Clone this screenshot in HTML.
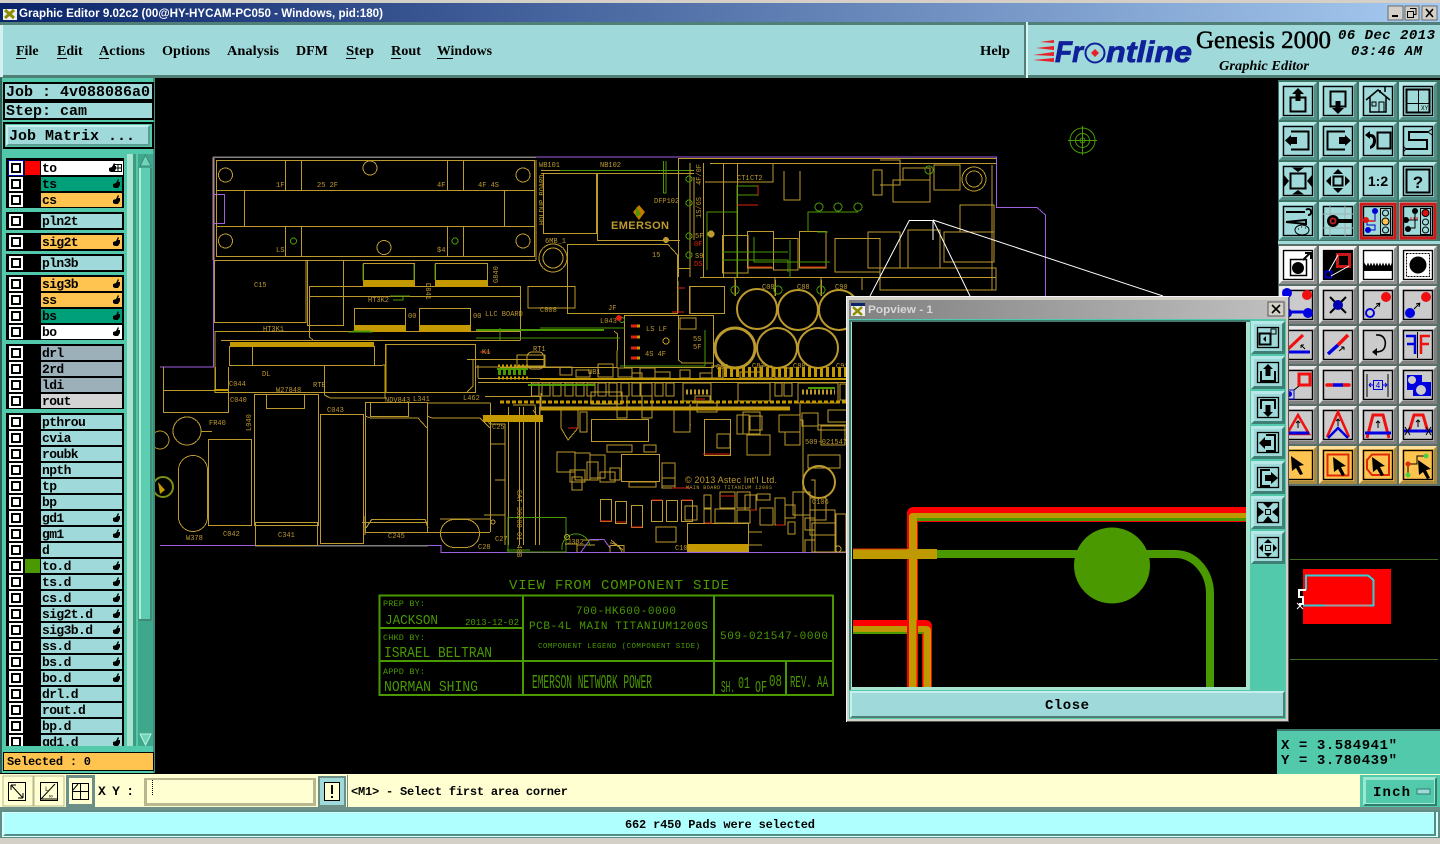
<!DOCTYPE html>
<html><head><meta charset="utf-8"><title>Graphic Editor</title>
<style>
html,body{margin:0;padding:0;background:#000;width:1440px;height:844px;overflow:hidden}
svg{position:absolute;left:0;top:0;display:block}
text{white-space:pre}
.m{font-family:"Liberation Mono",monospace;font-weight:bold;fill:#000}
.l{font-family:"Liberation Mono",monospace;font-weight:bold;font-size:13px;letter-spacing:-.6px;fill:#000}
.s{font-family:"Liberation Serif",serif;font-weight:bold;font-size:14px;fill:#000}
.t{font-family:"Liberation Mono",monospace;font-size:7px;fill:#bd9a2e}
.g{font-family:"Liberation Mono",monospace;fill:#4a9900}
</style></head><body>
<svg width="1440" height="844" viewBox="0 0 1440 844" xmlns="http://www.w3.org/2000/svg">
<defs>
<linearGradient id="tb" x1="0" x2="1" y1="0" y2="0"><stop offset="0" stop-color="#0a246a"/><stop offset="1" stop-color="#a6caf0"/></linearGradient>
<linearGradient id="pb" x1="0" x2="1" y1="0" y2="0"><stop offset="0" stop-color="#808080"/><stop offset="1" stop-color="#c0c0c0"/></linearGradient>
<g id="bt"><rect width="38" height="38" fill="#b8e8e8"/><path d="M38 0V38H0L3 35H35V3Z" fill="#4f8f86"/><rect x="3" y="3" width="32" height="32" fill="#9fd9d9"/><rect x="4.500" y="4.500" width="29" height="29" fill="none" stroke="#000" stroke-width="1.400"/></g>
<g id="bw"><rect width="38" height="38" fill="#f4f4f4"/><path d="M38 0V38H0L3 35H35V3Z" fill="#909090"/><rect x="3" y="3" width="32" height="32" fill="#fff"/><rect x="4.500" y="4.500" width="29" height="29" fill="none" stroke="#000" stroke-width="1.400"/></g>
<g id="bg"><rect width="38" height="38" fill="#e8e8e8"/><path d="M38 0V38H0L3 35H35V3Z" fill="#808080"/><rect x="3" y="3" width="32" height="32" fill="#cbcbcb"/><rect x="4.500" y="4.500" width="29" height="29" fill="none" stroke="#000" stroke-width="1.400"/></g>
<g id="bo"><rect width="38" height="38" fill="#ffdf9a"/><path d="M38 0V38H0L3 35H35V3Z" fill="#a88a40"/><rect x="3" y="3" width="32" height="32" fill="#ffc44f"/><rect x="4.500" y="4.500" width="29" height="29" fill="none" stroke="#000" stroke-width="1.400"/></g>
<g id="pt"><rect width="34" height="33" fill="#b8e8e8"/><path d="M34 0V33H0L3 30H31V3Z" fill="#3f8074"/><rect x="3" y="3" width="28" height="27" fill="#9fd9d9"/><rect x="6.500" y="6.500" width="21" height="20" fill="none" stroke="#000" stroke-width="1.300"/></g>
<g id="ck"><rect x="9" y="-7" width="14" height="14" fill="#fff"/><rect x="11" y="-5" width="10" height="10" fill="#000"/><rect x="13" y="-3" width="6" height="6" fill="#fff"/></g>
<path id="hd" d="M113 3V0L116-1 118-5 119-4 118-2 120-2V1L118 4H115Z" fill="#000"/>
<path id="ar" d="M0 0L13 9 8 10 12 18 9 19 5 12 1 15Z" fill="#000"/>
</defs>

<!-- window background -->
<rect width="1440" height="844" fill="#000"/>
<rect width="1440" height="3" fill="#d4d0c8"/>
<rect y="3" width="1440" height="19" fill="url(#tb)"/>
<rect x="3" y="6" width="14" height="14" fill="#eee"/><rect x="3" y="6" width="14" height="3" fill="#0a246a"/>
<path d="M5 10L14 18M14 10L5 18" stroke="#8c8c00" stroke-width="3"/>
<text x="19" y="17" font-family="Liberation Sans,sans-serif" font-weight="bold" font-size="11.500px" fill="#fff" textLength="364" lengthAdjust="spacingAndGlyphs">Graphic Editor 9.02c2 (00@HY-HYCAM-PC050 - Windows, pid:180)</text>
<g>
<rect x="1388" y="6" width="15" height="14" fill="#d4d0c8" stroke="#555" stroke-width=".8"/><rect x="1392" y="15" width="6" height="2" fill="#000"/>
<rect x="1405" y="6" width="14" height="14" fill="#d4d0c8" stroke="#555" stroke-width=".8"/><path d="M1410 8.500h6v6h-2M1407.500 11.500h6v6h-6z" fill="none" stroke="#000"/>
<rect x="1422" y="6" width="15" height="14" fill="#d4d0c8" stroke="#555" stroke-width=".8"/><path d="M1426 9L1433 17M1433 9L1426 17" stroke="#000" stroke-width="1.600"/>
</g>

<!-- menu bar -->
<rect y="22" width="1440" height="56" fill="#9fd9d9"/>
<rect y="22" width="1440" height="3" fill="#4f7f76"/>
<rect y="75" width="1440" height="3" fill="#4f7f76"/>
<rect x="0" y="25" width="3" height="52" fill="#d2f2f2"/>
<rect x="1024" y="25" width="2" height="52" fill="#4f7f76"/><rect x="1026" y="22" width="2" height="56" fill="#d8f4f4"/>
<text class="s" x="16" y="55">File</text><rect x="16" y="58" width="10" height="1"/>
<text class="s" x="57" y="55">Edit</text><rect x="57" y="58" width="10" height="1"/>
<text class="s" x="99" y="55" textLength="46" lengthAdjust="spacingAndGlyphs">Actions</text><rect x="99" y="58" width="10" height="1"/>
<text class="s" x="162" y="55" textLength="48" lengthAdjust="spacingAndGlyphs">Options</text>
<text class="s" x="227" y="55" textLength="52" lengthAdjust="spacingAndGlyphs">Analysis</text>
<text class="s" x="296" y="55">DFM</text>
<text class="s" x="346" y="55" textLength="28" lengthAdjust="spacingAndGlyphs">Step</text><rect x="346" y="58" width="10" height="1"/>
<text class="s" x="391" y="55" textLength="30" lengthAdjust="spacingAndGlyphs">Rout</text><rect x="391" y="58" width="10" height="1"/>
<text class="s" x="437" y="55" textLength="55" lengthAdjust="spacingAndGlyphs">Windows</text><rect x="437" y="58" width="16" height="1"/>
<text class="s" x="980" y="55" textLength="30" lengthAdjust="spacingAndGlyphs">Help</text>

<!-- logo -->
<path d="M1054 40L1040 42 1054 43ZM1054 46L1036 48 1054 50ZM1054 52L1033 55 1054 56ZM1054 58L1033 60 1054 62Z" fill="#e8202a"/>
<text x="1055" y="62" font-family="Liberation Sans,sans-serif" font-weight="bold" font-style="italic" font-size="30px" fill="#10209a" stroke="#10209a" stroke-width=".8" textLength="28" lengthAdjust="spacingAndGlyphs">Fr</text>
<circle cx="1095" cy="53" r="9.500" fill="none" stroke="#10209a" stroke-width="2"/><path d="M1095 49L1099 53 1095 57 1091 53Z" fill="#e8202a"/>
<text x="1106" y="62" font-family="Liberation Sans,sans-serif" font-weight="bold" font-style="italic" font-size="30px" fill="#10209a" stroke="#10209a" stroke-width=".8" textLength="86" lengthAdjust="spacingAndGlyphs">ntline</text>
<text x="1196" y="48" font-family="Liberation Serif,serif" font-size="25px" fill="#000" stroke="#000" stroke-width=".5" textLength="135" lengthAdjust="spacingAndGlyphs">Genesis 2000</text>
<text x="1219" y="70" font-family="Liberation Serif,serif" font-weight="bold" font-style="italic" font-size="14px" fill="#000" textLength="90" lengthAdjust="spacingAndGlyphs">Graphic Editor</text>
<text class="m" x="1338" y="39" font-size="14px" font-style="italic" textLength="97">06 Dec 2013</text>
<text class="m" x="1351" y="55" font-size="14px" font-style="italic" textLength="71">03:46 AM</text>

<!-- PCB canvas -->
<g fill="none" stroke="#bd9a2e" shape-rendering="crispEdges">
<path stroke="#a060e0" d="M213.500 260V367H160M213.500 157H996.500V207.500H1037L1045.500 215V297M160 545.500H441V552.500H846"/>
<path stroke="#b08a90" stroke-width="2" d="M213.500 157V260"/>
<path stroke="#808080" stroke-width="1.500" d="M213 157H536M255 545.500H428"/>
<path stroke="#a060e0" d="M213 194.500H224.500V223.500H213"/>
<path stroke="#4a9900" d="M216.500 195V223"/>
<!-- top connector block -->
<path d="M216.500 160.500H534.500V256.500H216.500ZM216.500 190.500H534.500M244.500 190.500V226.500H504.500V190.500M216.500 226.500H244.500M504.500 226.500H534.500M285.500 160.500V190.500M301.500 160.500V190.500M447.500 160.500V190.500M463.500 160.500V190.500M285.500 226.500V256.500M301.500 226.500V256.500M447.500 226.500V256.500M463.500 226.500V256.500M214 260.500H536M536 160V260"/>
<path d="M214.500 260.500H306V322.500H214.500ZM307.500 260.500H343.500V325.500H307.500ZM363.500 263.500H414.500V286M435.500 263.500H487.500V286M363.500 263V286M435.500 263V286M309.500 286.500H520.500M309.500 296.500H520.500M309.500 286V337L313 340M354.500 308.500H405.500V331M419.500 308.500H470.500V331M354.500 308V331M419.500 308V331M215 331.500H520.500M221 340.500H520.500M520.500 286V340M229.500 346V365.500H374.500V346M252.500 346V365M385.500 344.500H475.500V392.500H385.500ZM467 359.500H544M473 359.500V386L467 392M215 331V392.500H324M324.500 365.500V395L330 398H385L385 365L380 365.500H325"/>
<path d="M163.500 367V412.500H228.500V367M215.500 367V389M163 390.500H229M228.500 392.500H467M254.500 394.500H318.500V525.500H254.500ZM266.500 394.500V408.500H304.500V394.500M255.500 523V545.500H317.500V523M254 522.500H318M320.500 414.500H363.500V543.500H320.500ZM208.500 439.500H251.500V525.500H208.500ZM365.500 402.500H427.500V532.500H365.500ZM370.500 403V416.500H408.500V403M366 416.500L371 418H418L427 428M427.500 403H490.500M427 416L432 418H480L490 428M427.500 532V403M490.500 403V532M365.500 532.500H490M362 522.500H427"/>
<circle cx="187" cy="431" r="14"/><path d="M201 431.500H212"/>
<rect x="178.500" y="455.500" width="29" height="76" rx="14.500"/>
<circle cx="160" cy="440" r="9"/>
<rect x="440.500" y="519.500" width="39" height="28" rx="14"/>
<path d="M372 519.500H425M440 519H490M365 516V535M372 519L366 528M425 519L428 528"/>
<circle cx="225.500" cy="175" r="7"/><circle cx="225.500" cy="241" r="7"/><circle cx="370" cy="168" r="7"/><circle cx="384" cy="247.500" r="7"/><circle cx="523" cy="175" r="7"/><circle cx="523" cy="241" r="7"/>
<circle cx="293.500" cy="241" r="3" stroke="#4a9900"/><circle cx="455" cy="241" r="3" stroke="#4a9900"/>
<!-- right upper -->
<path d="M541 170.500H694M541 173.500H694M543.500 173.500V233.500H596.500V173.500M597.500 173.500V240.500H680M567.500 244.500H668L677.500 255V313.500H567.500ZM678.500 158V277M678.500 158.500H996M703.500 163V277M690 163V277M694 177V240M723.500 164V277M737.500 164V277M700 277.500H996M710 163.500H996M678 268.500H690M689.500 286.500H724.500V313.500H689.500ZM678 281V313M735 277V290M775 277V290M821 277V290M862 277V290"/>
<circle cx="553" cy="258" r="14"/><circle cx="553" cy="258" r="10"/>
<path d="M528 286.500H575V308H528ZM624.500 315.500H713.500V367.500H624.500ZM678.500 315V360L682 363H713M690 286V313M680 318H696V329H680ZM500 367.500H617L617.500 334L614 331M517 355H545V366H517Z"/>
<path d="M722.500 235.500H748V273H722.500ZM747.500 231.500H773.500V268H747.500ZM773.500 238.500H798V270H773.500ZM799.500 231.500H826V268H799.500ZM835 238.500H880V272H835ZM880 160H900V185H880M873 170H882V195H873ZM784 171V200H800V171M773 163V182H705M893 180H930V202H893ZM903 168H930V180H903ZM934 165H960V190H934ZM960 205H994V232H960ZM944 232H994V262H944ZM908 230H940V268H908ZM868 232H900V268H868ZM880 268H996V290H880ZM992 165V290"/>
<circle cx="974" cy="179" r="12"/><circle cx="974" cy="179" r="8"/><circle cx="868" cy="342" r="5"/>
<path stroke-width="1.500" d="M735 280V296M775 280V296M821 280V296"/>
<circle cx="735" cy="290" r="4" stroke="#4a9900"/><circle cx="778" cy="290" r="4" stroke="#4a9900"/><circle cx="821" cy="290" r="4" stroke="#4a9900"/>
<g stroke-width="2" shape-rendering="auto"><circle cx="757" cy="309" r="20"/><circle cx="798" cy="310" r="20"/><circle cx="839" cy="310" r="20"/><circle cx="735" cy="348" r="20" stroke-width="3"/><circle cx="777" cy="348" r="20"/><circle cx="818" cy="348" r="20"/></g>
<circle cx="666" cy="240" r="2.500" fill="#bd9a2e"/><circle cx="666" cy="341" r="3"/><circle cx="711" cy="234" r="3" fill="#bd9a2e"/>
<!-- long rails -->
<path d="M478 378.500H846M478 382.500H846M475 367H560M541 393V410M478 365V378"/>
<path stroke-width="2.500" d="M540 407.500H790"/>
<path d="M485 396.500H540V415M483 415.500L490 424H505V545M508.500 407V545M519.500 407V545M523.500 407V545M535.500 407V545M539.500 407V545M500 420H509M533 410L540 420M505 444H490M505 480H495M484 515H505M513 405H535V410"/>
<path d="M561 409H578V428L568 440 561 428ZM580 412H587V432H580ZM591.500 419.500H648.500V441.500H591.500ZM591 392H622V404H591ZM617 396H627V418H617ZM642 396H652V418H642ZM695 396H710V402H695ZM704.500 419.500H730.500V455.500H704.500ZM691 405H690V425H691M674 410H690V432H674ZM697 403H717V412H697ZM743 412H760V434H743ZM747 435H770V455H747ZM750 416H762V430H750ZM779 415H800V432H779ZM785 432H800V445H785ZM802 413H818V426H802ZM828 410H860V422H828ZM818 425H860V430H818Z"/>
<path d="M557 452H575V472H557ZM575 453H590V480H575ZM590 455H605V478H590ZM570 470H585V482H570ZM587 462H598V480H587ZM607 445H632V452H607ZM644 445H656V452H644ZM621.500 454.500H659.500V481.500H621.500ZM629 482H656V487H629ZM662 463H675V486H662ZM662 478H675V488H662ZM610 468H620V480H610ZM600 472H615V482H600ZM572 477H582V490H572ZM685 506H697V520H685ZM717 434H730V448H717ZM737 415H749V434H737Z"/>
<path d="M600.500 499.500H611.500V521.500H600.500ZM615.500 501.500H626.500V523.500H615.500ZM631.500 505.500H642.500V527.500H631.500ZM651.500 500.500H662.500V521.500H651.500ZM666.500 500.500H677.500V521.500H666.500ZM681.500 500.500H692.500V521.500H681.500ZM656 527H676V542H656ZM704 495H711V508H704ZM720 492H735V508H720ZM737 492H750V508H737ZM704 509H711V523H704ZM715 509H735V523H715ZM737 510H750V523H737ZM745 495H756V510H745ZM757 494H770V500H757ZM760 508H773V525H760ZM775 498H785V525H775ZM785 505H795V518H785ZM788 522H795V534H788ZM687.500 523.500H748.500V551.500H687.500ZM748 532H762M748 545H762"/>
<path d="M793 492H810V515H793ZM810 498H826V520H810ZM810 510H835V535H810ZM811 480H815V552M803 420V552M803 420H800V404M808 455H840V468H808ZM805 518H815V530H805ZM812 523H835V552H812ZM836 514H846V552H836ZM805 552V540H815V552M821 426H845V445H821Z"/>
<circle cx="819" cy="482" r="16" stroke-width="2" shape-rendering="auto"/><circle cx="838" cy="549" r="3"/>
<path d="M577 545L595 545M583 540H599M611 540L623 550"/>
<path stroke="#a060e0" d="M581 552L590 539.500H604L610 548V552"/>
<path stroke="#4a9900" d="M508 517.500H566V552H508ZM507 550H530M562 550A12 12 0 0 1 590 546"/>
<path d="M610 552V545.500H624V552M610 543A14 14 0 0 1 622 552M565 544H577V552"/>
<circle cx="567" cy="537" r="2.500"/><circle cx="493" cy="522" r="2"/>
<!-- connectors -->
<path d="M531.500 383H539V396H531.500ZM542 383H550V396H542ZM553 383H561V396H553ZM565 383H573V396H565ZM576 383H584V396H576ZM587 383H595V396H587ZM598 383H606V396H598ZM609 383H617V396H609ZM621 383H629V396H621ZM632 383H640V396H632ZM641 383H652V396H641ZM655 383H663V396H655ZM666 383H674V396H666ZM683 383H711V401H683ZM738 383H770V401H738ZM775 383H782V396H775ZM784 383H792V396H784ZM798 383H838V403H798ZM840 384H846V400H840Z"/>
<path d="M560 367H572V375H560ZM576 370H590V377H576ZM598 364H613V377H598ZM618 368H632V377H618ZM632 373H642V378H632ZM640 368H655V378H640ZM655 372H670V378H655ZM680 370H690V378H680ZM700 373H712V378H700ZM712 366H723V378H712ZM740 372H760V378H740ZM760 366H772V378H760ZM775 368H790V378H775Z"/>
<rect x="527" y="352" width="17" height="17" rx="5"/>
<!-- gold fills -->
<g fill="#c49a00" stroke="none">
<rect x="363" y="280" width="52" height="7"/><rect x="435" y="280" width="52" height="7"/>
<rect x="354" y="325" width="52" height="7"/><rect x="419" y="325" width="52" height="7"/>
<rect x="230" y="342" width="144" height="5"/>
<rect x="483" y="415" width="60" height="7"/>
<rect x="687" y="544" width="61" height="7"/>
<rect x="385" y="344" width="1.500" height="48"/>
<rect x="214" y="389" width="14" height="2"/>
<rect x="540" y="378" width="306" height="2"/>
<rect x="540" y="408" width="250" height="2.500"/>
</g>
<!-- dense comb -->
<path stroke-width="5" stroke-dasharray="2 2" d="M686 392H708M802 392H835"/>
<path stroke="#c49a00" stroke-width="10" stroke-dasharray="3 3" d="M718 372H846"/>
<path stroke="#c49a00" stroke-width="3" stroke-dasharray="4 2" d="M500 402H846"/>
<path stroke="#4a9900" stroke-width="6" stroke-dasharray="3 2" d="M498 372H528"/>
<path stroke="#c49a00" stroke-width="3" stroke-dasharray="2 2" d="M498 366H528M498 378H528"/>
<path stroke="#4a9900" stroke-width="2" d="M528 385H595M497 369H528M808 388H835"/>
<!-- greens -->
<g stroke="#4a9900">
<path d="M560 170.500H690M663.500 161V193H666V161M737 186H758V195H737ZM737 185V277M737 212H707V270M722 252H788M722 260H788V272M808 232V212H819M818 212H858M828 232H817M754 237V262M754 262H830M790 240V278M500 328V340M540 328H625M476 338H620M705 330V366H620"/>
<circle cx="689" cy="179" r="3"/><circle cx="689" cy="203" r="3"/><circle cx="689" cy="236" r="3"/><circle cx="689" cy="255" r="3"/><circle cx="622" cy="320" r="2.500"/>
<circle cx="819" cy="207" r="4"/><circle cx="838" cy="207" r="4"/><circle cx="858" cy="207" r="4"/><circle cx="929" cy="170" r="4"/>
<path d="M390 296H410M393 300H403V297M353 331H370M348 332H373M363 281V264M414 264V280M435 264V280"/>
<path stroke-width="2" d="M476 330H604"/>
</g>
<!-- reds -->
<g stroke="#e02010">
<path d="M737 205H758M758 185V196M748 267H772M800 267H826M679 288H685M684 312H672M480 352H490"/>
<path d="M703 454H730M612 521H600M642 527H631M662 500H652M692 500H682M626 522H616M568 428H578M672 488H690M696 399H705M721 496H735M712 523H705M757 510H750M776 525H785"/>
</g>
<path stroke="#e02010" stroke-width="3" d="M631 326H637M631 337H637M631 348H637M631 358H637"/>
<path stroke="#c49a00" stroke-width="3" d="M637 326H640M637 337H640M637 348H640M637 358H640"/>
</g>
<circle cx="619" cy="318" r="3" fill="#e02010"/>
<circle cx="163" cy="487" r="10" fill="none" stroke="#7f8f10" stroke-width="2"/><path d="M158 482L165 490 160 494Z" fill="#c49a00"/>
<path d="M639 205L645 212 639 220 633 212Z" fill="#c47a00"/><path d="M636 207L641 214 636 217Z" fill="#4a9900"/>
<g class="t">
<text class="t" x="276" y="187">1F</text><text class="t" x="317" y="187">25 2F</text><text class="t" x="437" y="187">4F</text><text class="t" x="478" y="187">4F 4S</text>
<text class="t" x="276" y="252">LS</text><text class="t" x="437" y="252">$4</text>
<text class="t" x="254" y="287" font-size="8">C15</text><text class="t" x="368" y="302">HT3K2</text><text class="t" x="263" y="331">HT3K1</text>
<text class="t" x="408" y="318">00</text><text class="t" x="473" y="318">00</text><text class="t" x="485" y="316" font-size="8">LLC BOARD</text>
<text class="t" x="482" y="354">K1</text><text class="t" x="229" y="386">C044</text><text class="t" x="230" y="402">C040</text><text class="t" x="276" y="392">W27848</text><text class="t" x="313" y="387">RTE</text>
<text class="t" x="262" y="376">DL</text><text class="t" x="385" y="402">NDV843</text><text class="t" x="413" y="401">L341</text><text class="t" x="463" y="400">L462</text>
<text class="t" x="327" y="412">C043</text><text class="t" x="209" y="425">FR40</text><text class="t" x="223" y="536">C042</text><text class="t" x="278" y="537">C341</text><text class="t" x="388" y="538">C245</text><text class="t" x="186" y="540">W378</text>
<text class="t" x="539" y="167">WB101</text><text class="t" x="600" y="167">NB102</text><text class="t" x="654" y="203">DFP102</text><text class="t" x="652" y="257">15</text><text class="t" x="608" y="310">JF</text><text class="t" x="600" y="323">L043</text>
<text class="t" x="540" y="312">C808</text><text class="t" x="545" y="243">6MB_1</text><text class="t" x="533" y="351">RT1</text><text class="t" x="588" y="374">WB1</text><text class="t" x="646" y="331">LS LF</text><text class="t" x="645" y="356">4S 4F</text>
<text class="t" x="693" y="341">5S</text><text class="t" x="693" y="349">5F</text><text class="t" x="695" y="238">5F</text><text class="t" x="695" y="258">S9</text>
<text x="694" y="246" font-family="Liberation Mono,monospace" font-size="7px" fill="#e02010">0F</text><text x="694" y="266" font-family="Liberation Mono,monospace" font-size="7px" fill="#e02010">DS</text>
<text class="t" x="737" y="180">CT1</text><text class="t" x="750" y="180" fill="#d0601a">CT2</text>
<text class="t" x="762" y="289">C08</text><text class="t" x="797" y="289">C88</text><text class="t" x="835" y="289">C90</text><text class="t" x="716" y="369">C89</text><text class="t" x="752" y="368">C87</text><text class="t" x="793" y="368">C88</text><text class="t" x="836" y="368">C91</text>
<text class="t" x="492" y="429">C25</text><text class="t" x="805" y="444" font-size="6">509-021547-00</text><text class="t" x="812" y="504">C106</text><text class="t" x="675" y="550">C101</text><text class="t" x="478" y="549">C28</text><text class="t" x="567" y="544">J382</text><text class="t" x="495" y="541">C27</text>
<text x="685" y="483" font-family="Liberation Sans,sans-serif" font-size="9px" fill="#bd9a2e" textLength="92">© 2013 Astec Int'l Ltd.</text>
<text x="686" y="489" font-family="Liberation Mono,monospace" font-size="5px" fill="#bd9a2e" textLength="86">MAIN BOARD TITANIUM 1200S</text>
<text x="611" y="229" font-family="Liberation Sans,sans-serif" font-weight="bold" font-size="11px" fill="#bd9a2e" textLength="58">EMERSON</text>
<text transform="translate(544,225) rotate(-90)" class="t">HOLDUP BOARD</text><text transform="translate(701,185) rotate(-90)" class="t">4F/0F</text><text transform="translate(701,218) rotate(-90)" class="t">1S/6S</text>
<text transform="translate(426,283) rotate(90)" class="t">D841</text><text transform="translate(498,283) rotate(-90)" class="t">G840</text><text transform="translate(251,431) rotate(-90)" class="t">L040</text>
<text transform="translate(517,490) rotate(90)" class="t" font-size="6.500">CAT-38208-01-48B</text>
</g>

<!-- crosshair -->
<g fill="none" stroke="#4a9900"><circle cx="1082.500" cy="140.500" r="12.500"/><circle cx="1082.500" cy="140.500" r="7"/><circle cx="1082.500" cy="140.500" r="2.500"/><path d="M1068 140.500H1097M1082.500 126V155" shape-rendering="crispEdges"/></g>

<!-- title block -->
<g fill="none" stroke="#4a9900" stroke-width="2" shape-rendering="crispEdges"><path d="M379.500 595.500H833V695H379.500ZM523 595V695M714 595V695M380 661H833M380 628H523M786 661V695"/></g>
<text class="g" x="509" y="589" font-size="14px" textLength="220">VIEW FROM COMPONENT SIDE</text>
<text class="g" x="383" y="606" font-size="8.500px" textLength="42">PREP BY:</text>
<text class="g" x="385" y="624" font-size="14px" textLength="53" lengthAdjust="spacingAndGlyphs">JACKSON</text>
<text class="g" x="465" y="625" font-size="9px" textLength="54">2013-12-02</text>
<text class="g" x="383" y="640" font-size="8.500px" textLength="42">CHKD BY:</text>
<text class="g" x="384" y="657" font-size="15px" textLength="108" lengthAdjust="spacingAndGlyphs">ISRAEL BELTRAN</text>
<text class="g" x="383" y="674" font-size="8.500px" textLength="42">APPD BY:</text>
<text class="g" x="384" y="691" font-size="15px" textLength="94" lengthAdjust="spacingAndGlyphs">NORMAN SHING</text>
<text class="g" x="576" y="614" font-size="11px" textLength="100">700-HK600-0000</text>
<text class="g" x="529" y="629" font-size="11px" textLength="179">PCB-4L MAIN TITANIUM1200S</text>
<text class="g" x="538" y="648" font-size="7.500px" textLength="162">COMPONENT LEGEND (COMPONENT SIDE)</text>
<text class="g" x="720" y="639" font-size="11px" textLength="108">509-021547-0000</text>
<text class="g" x="532" y="688" font-size="19px" textLength="120" lengthAdjust="spacingAndGlyphs">EMERSON NETWORK POWER</text>
<text class="g" x="721" y="692" font-size="17px" textLength="14" lengthAdjust="spacingAndGlyphs">SH.</text>
<text class="g" x="738" y="688" font-size="17px" textLength="12" lengthAdjust="spacingAndGlyphs">01</text>
<text class="g" x="755" y="692" font-size="17px" textLength="12" lengthAdjust="spacingAndGlyphs">OF</text>
<text class="g" x="769" y="686" font-size="17px" textLength="13" lengthAdjust="spacingAndGlyphs">08</text>
<text class="g" x="790" y="687" font-size="17px" textLength="38" lengthAdjust="spacingAndGlyphs">REV. AA</text>

<!-- zoom lines -->
<path fill="none" stroke="#fff" d="M909 220.500H933M909.500 220L870 296M933 220L970 296M933 220L1163 296M933 220V240"/>

<!-- left panel -->
<rect x="0" y="78" width="155" height="695" fill="#52c9aa"/>
<rect x="0" y="78" width="2" height="695" fill="#2f5f55"/><rect x="153" y="78" width="2" height="695" fill="#3f8a78"/>
<rect x="3" y="82" width="151" height="19" fill="#000"/><rect x="5" y="84" width="147" height="15" fill="#9fd9d9"/>
<rect x="3" y="101" width="151" height="19" fill="#000"/><rect x="5" y="103" width="147" height="15" fill="#9fd9d9"/>
<text class="m" x="6" y="96" font-size="15px">Job : 4v088086a0</text>
<text class="m" x="6" y="115" font-size="15px">Step: cam</text>
<rect x="3" y="122" width="151" height="27" fill="#000"/><rect x="5" y="124" width="147" height="23" fill="#52c9aa"/>
<rect x="6" y="125" width="144" height="21" fill="#c8efef"/><path d="M150 125V146H6L8 144H148V127Z" fill="#5b9d93"/><rect x="8" y="127" width="140" height="17" fill="#9fd9d9"/>
<text class="m" x="9" y="140" font-size="15px">Job Matrix ...</text>

<rect x="6" y="158" width="118" height="589" fill="#000"/>
<rect x="6" y="208" width="118" height="4" fill="#52c9aa"/><rect x="6" y="230" width="118" height="3" fill="#52c9aa"/><rect x="6" y="251" width="118" height="3" fill="#52c9aa"/><rect x="6" y="272" width="118" height="3" fill="#52c9aa"/><rect x="6" y="340" width="118" height="4" fill="#52c9aa"/><rect x="6" y="409" width="118" height="4" fill="#52c9aa"/>
<rect x="8" y="160" width="16" height="16" fill="#0000a0"/>
<rect x="25" y="161" width="15" height="14" fill="#f00"/><rect x="25" y="559" width="15" height="14" fill="#4a9900"/>

<rect x="41" y="161" width="82" height="14" fill="#fff"/><use href="#ck" y="168"/><text class="l" x="42" y="172">to</text><use href="#hd" x="-4" y="168"/><path d="M114.500 164.500h7v7h-7zM118 165v6M115 168h6" fill="none" stroke="#000"/>
<rect x="41" y="177" width="81" height="14" fill="#00a07a"/><use href="#ck" y="184"/><text class="l" x="42" y="188">ts</text><use href="#hd" y="184"/>
<rect x="41" y="193" width="81" height="14" fill="#ffc44f"/><use href="#ck" y="200"/><text class="l" x="42" y="204">cs</text><use href="#hd" y="200"/>
<rect x="41" y="214" width="81" height="14" fill="#9fd9d9"/><use href="#ck" y="221"/><text class="l" x="42" y="225">pln2t</text>
<rect x="41" y="235" width="81" height="14" fill="#ffc44f"/><use href="#ck" y="242"/><text class="l" x="42" y="246">sig2t</text><use href="#hd" y="242"/>
<rect x="41" y="256" width="81" height="14" fill="#9fd9d9"/><use href="#ck" y="263"/><text class="l" x="42" y="267">pln3b</text>
<rect x="41" y="277" width="81" height="14" fill="#ffc44f"/><use href="#ck" y="284"/><text class="l" x="42" y="288">sig3b</text><use href="#hd" y="284"/>
<rect x="41" y="293" width="81" height="14" fill="#ffc44f"/><use href="#ck" y="300"/><text class="l" x="42" y="304">ss</text><use href="#hd" y="300"/>
<rect x="41" y="309" width="81" height="14" fill="#00a07a"/><use href="#ck" y="316"/><text class="l" x="42" y="320">bs</text><use href="#hd" y="316"/>
<rect x="41" y="325" width="81" height="14" fill="#fff"/><use href="#ck" y="332"/><text class="l" x="42" y="336">bo</text><use href="#hd" y="332"/>
<rect x="41" y="346" width="81" height="14" fill="#9cb0ba"/><use href="#ck" y="353"/><text class="l" x="42" y="357">drl</text>
<rect x="41" y="362" width="81" height="14" fill="#9cb0ba"/><use href="#ck" y="369"/><text class="l" x="42" y="373">2rd</text>
<rect x="41" y="378" width="81" height="14" fill="#9cb0ba"/><use href="#ck" y="385"/><text class="l" x="42" y="389">ldi</text>
<rect x="41" y="394" width="81" height="14" fill="#d4d4d4"/><use href="#ck" y="401"/><text class="l" x="42" y="405">rout</text>
<rect x="41" y="415" width="81" height="14" fill="#9fd9d9"/><use href="#ck" y="422"/><text class="l" x="42" y="426">pthrou</text>
<rect x="41" y="431" width="81" height="14" fill="#9fd9d9"/><use href="#ck" y="438"/><text class="l" x="42" y="442">cvia</text>
<rect x="41" y="447" width="81" height="14" fill="#9fd9d9"/><use href="#ck" y="454"/><text class="l" x="42" y="458">roubk</text>
<rect x="41" y="463" width="81" height="14" fill="#9fd9d9"/><use href="#ck" y="470"/><text class="l" x="42" y="474">npth</text>
<rect x="41" y="479" width="81" height="14" fill="#9fd9d9"/><use href="#ck" y="486"/><text class="l" x="42" y="490">tp</text>
<rect x="41" y="495" width="81" height="14" fill="#9fd9d9"/><use href="#ck" y="502"/><text class="l" x="42" y="506">bp</text>
<rect x="41" y="511" width="81" height="14" fill="#9fd9d9"/><use href="#ck" y="518"/><text class="l" x="42" y="522">gd1</text><use href="#hd" y="518"/>
<rect x="41" y="527" width="81" height="14" fill="#9fd9d9"/><use href="#ck" y="534"/><text class="l" x="42" y="538">gm1</text><use href="#hd" y="534"/>
<rect x="41" y="543" width="81" height="14" fill="#9fd9d9"/><use href="#ck" y="550"/><text class="l" x="42" y="554">d</text>
<rect x="41" y="559" width="81" height="14" fill="#9fd9d9"/><use href="#ck" y="566"/><text class="l" x="42" y="570">to.d</text><use href="#hd" y="566"/>
<rect x="41" y="575" width="81" height="14" fill="#9fd9d9"/><use href="#ck" y="582"/><text class="l" x="42" y="586">ts.d</text><use href="#hd" y="582"/>
<rect x="41" y="591" width="81" height="14" fill="#9fd9d9"/><use href="#ck" y="598"/><text class="l" x="42" y="602">cs.d</text><use href="#hd" y="598"/>
<rect x="41" y="607" width="81" height="14" fill="#9fd9d9"/><use href="#ck" y="614"/><text class="l" x="42" y="618">sig2t.d</text><use href="#hd" y="614"/>
<rect x="41" y="623" width="81" height="14" fill="#9fd9d9"/><use href="#ck" y="630"/><text class="l" x="42" y="634">sig3b.d</text><use href="#hd" y="630"/>
<rect x="41" y="639" width="81" height="14" fill="#9fd9d9"/><use href="#ck" y="646"/><text class="l" x="42" y="650">ss.d</text><use href="#hd" y="646"/>
<rect x="41" y="655" width="81" height="14" fill="#9fd9d9"/><use href="#ck" y="662"/><text class="l" x="42" y="666">bs.d</text><use href="#hd" y="662"/>
<rect x="41" y="671" width="81" height="14" fill="#9fd9d9"/><use href="#ck" y="678"/><text class="l" x="42" y="682">bo.d</text><use href="#hd" y="678"/>
<rect x="41" y="687" width="81" height="14" fill="#9fd9d9"/><use href="#ck" y="694"/><text class="l" x="42" y="698">drl.d</text>
<rect x="41" y="703" width="81" height="14" fill="#9fd9d9"/><use href="#ck" y="710"/><text class="l" x="42" y="714">rout.d</text>
<rect x="41" y="719" width="81" height="14" fill="#9fd9d9"/><use href="#ck" y="726"/><text class="l" x="42" y="730">bp.d</text>
<rect x="41" y="735" width="81" height="14" fill="#9fd9d9"/><use href="#ck" y="742"/><text class="l" x="42" y="746">gd1.d</text><use href="#hd" y="742"/>

<rect x="0" y="746" width="153" height="27" fill="#52c9aa"/><rect x="0" y="746" width="2" height="27" fill="#2f5f55"/>
<rect x="3" y="752" width="151" height="19" fill="#000"/><rect x="4" y="753" width="149" height="17" fill="#ffc44f"/>
<text class="m" x="7" y="765" font-size="12px" textLength="84">Selected : 0</text>
<!-- scroll column -->
<rect x="127" y="154" width="6" height="592" fill="#a6e4d0"/><rect x="133" y="154" width="3" height="592" fill="#3f9a82"/>
<rect x="138" y="154" width="15" height="592" fill="#3fa88c"/>
<rect x="139" y="168" width="13" height="453" fill="#5ccdb0"/><rect x="139" y="168" width="2" height="453" fill="#b0ecd8"/><rect x="150" y="168" width="2" height="453" fill="#3f8a78"/><rect x="139" y="619" width="13" height="2" fill="#3f8a78"/>
<path d="M145.500 155L151 166H140Z" fill="#6fd5ba" stroke="#3f8a78"/><path d="M145.500 745L151 734H140Z" fill="#6fd5ba" stroke="#c0f0e0"/>

<!-- right toolbar backgrounds -->
<rect x="1278" y="80" width="162" height="162" fill="#3c7566"/>
<rect x="1278" y="241" width="162" height="4" fill="#9fd9d9"/>
<rect x="1278" y="244" width="162" height="242" fill="#5a6f68"/>

<!-- toolbar group 1 -->
<g transform="translate(1279,82)"><use href="#bt"/><path d="M11.500 15.500H26.500V29.500H11.500Z" fill="none" stroke="#000" stroke-width="2"/><path d="M19 6L25 12H21.500V19H16.500V12H13Z"/></g>
<g transform="translate(1319,82)"><use href="#bt"/><path d="M11.500 9.500H26.500V24.500H11.500Z" fill="none" stroke="#000" stroke-width="2"/><path d="M19 32L25 26H21.500V19H16.500V26H13Z"/></g>
<g transform="translate(1359,82)"><use href="#bt"/><path d="M7 18L19 8 31 18M11 15V30H27V15M21 8V11M26 5V10" fill="none" stroke="#000" stroke-width="1.500"/><path d="M13 20h4v4h-4zM20 20h5v10h-5z" fill="none" stroke="#000"/></g>
<g transform="translate(1399,82)"><use href="#bt"/><rect x="7.500" y="7.500" width="23" height="23" fill="none" stroke="#000" stroke-width="2"/><path d="M19.500 8V30M8 21.500H30" stroke="#000"/><text x="22" y="28" font-family="Liberation Mono,monospace" font-size="6px" fill="#000">XY</text></g>

<g transform="translate(1279,122)"><use href="#bt"/><path d="M12 9.500H29.500V27.500H12" fill="none" stroke="#000" stroke-width="2"/><path d="M6 18.500L12 13V15H18V22H12V24Z"/></g>
<g transform="translate(1319,122)"><use href="#bt"/><path d="M26 9.500H8.500V27.500H26" fill="none" stroke="#000" stroke-width="2"/><path d="M32 18.500L26 13V15H20V22H26V24Z"/></g>
<g transform="translate(1359,122)"><use href="#bt"/><rect x="18.500" y="10.500" width="13" height="16" fill="none" stroke="#000" stroke-width="2"/><path d="M6 13L11 9V12C16 12 17 15 17 19 17 23 15 26 11 27V24C13 23 14 21 14 18.500 14 16 13 15 11 15V17Z"/></g>
<g transform="translate(1399,122)"><use href="#bt"/><path d="M29 10H10V18H28V27H7" fill="none" stroke="#000" stroke-width="2"/><path d="M29 10L33 7M29 10L33 13M7 27L4 24M7 27L4 30" stroke="#000" fill="none"/></g>

<g transform="translate(1279,162)"><use href="#bt"/><rect x="11.500" y="11.500" width="15" height="15" fill="none" stroke="#000" stroke-width="2"/><path d="M19 10L13 5.500H25ZM19 28L13 32.500H25ZM10 19L5 13V25ZM28 19L33 13V25Z"/></g>
<g transform="translate(1319,162)"><use href="#bt"/><rect x="14.500" y="14.500" width="9" height="9" fill="none" stroke="#000" stroke-width="2"/><path d="M19 7L14 12H24ZM19 31L14 26H24ZM7 19L12 14V24ZM31 19L26 14V24Z"/></g>
<g transform="translate(1359,162)"><use href="#bt"/><text x="19" y="24" text-anchor="middle" font-family="Liberation Sans,sans-serif" font-weight="bold" font-size="14px" fill="#000">1:2</text></g>
<g transform="translate(1399,162)"><use href="#bt"/><rect x="7.500" y="7.500" width="23" height="23" fill="none" stroke="#000" stroke-width="2"/><text x="19" y="26" text-anchor="middle" font-family="Liberation Sans,sans-serif" font-weight="bold" font-size="17px" fill="#000">?</text></g>

<g transform="translate(1279,202)"><use href="#bt"/><path d="M7 10H26M7 20L27 18V22ZM27 8A3 3 0 1 1 29 13" stroke="#000" stroke-width="2" fill="none"/><ellipse cx="23" cy="28" rx="7" ry="5" fill="none" stroke="#000"/><path d="M19 27h1M22 25h1M26 26h1" stroke="#000"/></g>
<g transform="translate(1319,202)"><use href="#bt"/><path d="M11 4V34M26 4V34M4 12H34M4 26H34" stroke="#9db0b0"/><circle cx="14" cy="19" r="6" fill="#000"/><circle cx="14" cy="19" r="3.500" fill="#c02020"/><rect x="12.500" y="17.500" width="3" height="3" fill="#000"/><rect x="19" y="17" width="14" height="4"/></g>
<g transform="translate(1359,202)"><use href="#bt"/><rect x="2" y="2" width="34" height="34" fill="none" stroke="#d01818" stroke-width="3"/><path d="M16 9V19H8M8 19V23H16V28H8" fill="none" stroke="#0000d0"/><path d="M8 19H16" stroke="#e01010" stroke-width="1.500"/><circle cx="16" cy="9" r="3" fill="#0000d0"/><circle cx="7" cy="18" r="3" fill="#e01010"/><circle cx="9" cy="28" r="3" fill="#0000d0"/><rect x="21.500" y="6.500" width="10" height="26" fill="#9fd9d9" stroke="#000"/><circle cx="26.500" cy="11" r="3" fill="none" stroke="#000"/><circle cx="26.500" cy="19.500" r="3.500" fill="#ffc44f" stroke="#000"/><circle cx="26.500" cy="28" r="3" fill="none" stroke="#000"/></g>
<g transform="translate(1399,202)"><use href="#bt"/><rect x="2" y="2" width="34" height="34" fill="none" stroke="#d01818" stroke-width="3"/><path d="M16 9V26H9M7 18H19" fill="none" stroke="#000"/><path d="M12 15V18M15 15V18M18 15V18" stroke="#d01818"/><circle cx="16" cy="9" r="3"/><circle cx="7" cy="18" r="3"/><circle cx="9" cy="27" r="3"/><rect x="21.500" y="6.500" width="10" height="26" fill="#9fd9d9" stroke="#000"/><circle cx="26.500" cy="11" r="3.500" fill="#e01010" stroke="#000"/><circle cx="26.500" cy="20" r="3" fill="none" stroke="#000"/><circle cx="26.500" cy="28" r="3" fill="none" stroke="#000"/></g>

<!-- toolbar group 2 -->
<g transform="translate(1279,246)"><use href="#bw"/><rect x="11.500" y="13.500" width="16" height="16" fill="none" stroke="#000" stroke-width="1.500"/><circle cx="19" cy="22" r="6"/><path d="M24 14L31 7M26 7H32V13" stroke="#000" stroke-width="2" fill="none"/></g>
<g transform="translate(1319,246)"><use href="#bw"/><rect x="4.500" y="4.500" width="29" height="29" fill="#000"/><rect x="18.500" y="8.500" width="12" height="12" fill="none" stroke="#c81818" stroke-width="3"/><rect x="6.500" y="25.500" width="6" height="6" fill="none" stroke="#0000c0" stroke-width="2"/><path d="M10 25L19 9M12 30L30 20" stroke="#fff"/></g>
<g transform="translate(1359,246)"><use href="#bw"/><path d="M5 16.500V25H33V16.500L31.500 20 30 16.500 28.500 20 27 16.500 25.500 20 24 16.500 22.500 20 21 16.500 19.500 20 18 16.500 16.500 20 15 16.500 13.500 20 12 16.500 10.500 20 9 16.500 7.500 20Z"/></g>
<g transform="translate(1399,246)"><use href="#bw"/><rect x="7.500" y="7.500" width="23" height="23" fill="none" stroke="#000" stroke-dasharray="2 1"/><circle cx="19" cy="19" r="8.500"/></g>

<g transform="translate(1279,286)"><use href="#bg"/><path d="M9 8V26H28" stroke="#0000e0" stroke-width="3" fill="none"/><circle cx="8" cy="7" r="5" fill="#0000e0"/><circle cx="8" cy="27" r="5" fill="#0000e0"/><circle cx="29" cy="27" r="5" fill="#0000e0"/><circle cx="28" cy="9" r="5" fill="#f01010"/></g>
<g transform="translate(1319,286)"><use href="#bg"/><path d="M11 11L27 27M27 11L11 27" stroke="#000" stroke-width="2"/><circle cx="19" cy="19" r="5" fill="#0000b0"/></g>
<g transform="translate(1359,286)"><use href="#bg"/><circle cx="27" cy="11" r="5" fill="#f01010"/><circle cx="11" cy="27" r="4" fill="none" stroke="#0000e0" stroke-width="2"/><path d="M15 23L21 17M21 17L17 18M21 17L20 21" stroke="#000" fill="none"/></g>
<g transform="translate(1399,286)"><use href="#bg"/><circle cx="27" cy="11" r="5" fill="#f01010"/><circle cx="11" cy="27" r="5" fill="#0000e0"/><path d="M15 23L21 17M21 17L17 18M21 17L20 21" stroke="#000" fill="none"/></g>

<g transform="translate(1279,326)"><use href="#bg"/><path d="M6 26H31" stroke="#0000e0" stroke-width="3"/><path d="M7 25L24 9" stroke="#f01010" stroke-width="3"/><path d="M22 19L26 23M22 19V22M22 19H25" stroke="#000" fill="none"/></g>
<g transform="translate(1319,326)"><use href="#bg"/><path d="M9 28L19 19" stroke="#0000e0" stroke-width="3.500"/><path d="M19 19L29 9" stroke="#f01010" stroke-width="3.500"/><path d="M20 25L25 21M25 21L22 21M25 21L25 24" stroke="#000" fill="none"/></g>
<g transform="translate(1359,326)"><use href="#bg"/><path d="M17 9C26 8 27 16 26 20 25 25 21 26 16 26" fill="none" stroke="#000" stroke-width="1.600"/><path d="M13 26L18 22V30Z"/></g>
<g transform="translate(1399,326)"><use href="#bg"/><path d="M18.500 6V32" stroke="#000"/><path d="M7 10H16V28M8 18H16" stroke="#0000e0" stroke-width="2.500" fill="none"/><path d="M31 10H22V28M30 18H22" stroke="#f01010" stroke-width="2.500" fill="none"/></g>

<g transform="translate(1279,366)"><use href="#bg"/><rect x="20" y="8" width="11" height="11" fill="none" stroke="#f01010" stroke-width="3"/><rect x="6" y="24" width="9" height="9" fill="none" stroke="#0000e0"/><circle cx="10" cy="28" r="3" fill="#0000e0"/><path d="M15 24L20 20" stroke="#000"/></g>
<g transform="translate(1319,366)"><use href="#bg"/><path d="M8 19H14M24 19H30" stroke="#f01010" stroke-width="3.500" stroke-linecap="round"/><path d="M14 19H24" stroke="#0000e0" stroke-width="3.500"/></g>
<g transform="translate(1359,366)"><use href="#bg"/><path d="M8 8V31M29 8V31" stroke="#000"/><path d="M10 19H14M24 19H28M10 19L12 17M10 19L12 21M28 19L26 17M28 19L26 21" stroke="#0000e0" fill="none"/><rect x="14.500" y="14.500" width="9" height="9" fill="none" stroke="#0000e0"/><text x="19" y="22" text-anchor="middle" font-family="Liberation Sans,sans-serif" font-size="8px" fill="#0000e0">4</text></g>
<g transform="translate(1399,366)"><use href="#bg"/><path d="M8 9H23V16H32V30H14V24H8Z" fill="#0000e0"/><circle cx="13" cy="14" r="4" fill="#cbcbcb"/><circle cx="22" cy="24" r="5" fill="#cbcbcb"/></g>

<g transform="translate(1279,406)"><use href="#bg"/><path d="M8 28L19 9 30 28Z" fill="none" stroke="#f01010" stroke-width="2.500"/><path d="M8 27H30" stroke="#0000e0" stroke-width="3"/><path d="M19 15V22M17 17L19 15 21 17" stroke="#000" fill="none"/></g>
<g transform="translate(1319,406)"><use href="#bg"/><path d="M8 31L19 6 30 31" fill="none" stroke="#f01010" stroke-width="2.500"/><path d="M9 32L19 22 29 32" fill="none" stroke="#0000e0" stroke-width="2.500"/><path d="M19 13V20M17 15L19 13 21 15" stroke="#000" fill="none"/></g>
<g transform="translate(1359,406)"><use href="#bg"/><path d="M8 32L14 9H24L30 32" fill="none" stroke="#f01010" stroke-width="3"/><path d="M6 27H32" stroke="#0000e0" stroke-width="3"/><path d="M19 15V22M17 17L19 15 21 17" stroke="#000" fill="none"/></g>
<g transform="translate(1399,406)"><use href="#bg"/><path d="M10 26L15 9H24L29 26" fill="none" stroke="#f01010" stroke-width="3"/><path d="M5 25H33" stroke="#0000e0" stroke-width="3"/><path d="M19 14V21M17 16L19 14 21 16M6 21L11 29M11 21L6 29M27 21L32 29M32 21L27 29" stroke="#000" fill="none"/></g>

<g transform="translate(1279,446)"><use href="#bo"/><use href="#ar" x="12" y="10"/></g>
<g transform="translate(1319,446)"><use href="#bo"/><rect x="8.500" y="8.500" width="21" height="21" fill="none" stroke="#e02808" stroke-width="2"/><use href="#ar" x="14" y="11"/></g>
<g transform="translate(1359,446)"><use href="#bo"/><path d="M13 8.500H30V29H13L8 23V14Z" fill="none" stroke="#e02808" stroke-width="2"/><use href="#ar" x="13" y="11"/></g>
<g transform="translate(1399,446)"><use href="#bo"/><path d="M9 29V18H18V10H27" fill="none" stroke="#000"/><circle cx="9" cy="18" r="2.500" fill="#e02808"/><circle cx="9" cy="29" r="2.500" fill="#4ad040"/><circle cx="27" cy="10" r="2.500" fill="#4ad040"/><use href="#ar" x="19" y="14"/></g>

<!-- minimap -->
<path d="M1290 559.500H1438M1290 659.500H1438" stroke="#3f6a20" shape-rendering="crispEdges"/>
<rect x="1303" y="569" width="88" height="55" fill="#f00"/>
<path d="M1306 590V575.500H1368L1373.500 580V605.500H1303" fill="none" stroke="#30d0d8" stroke-width="2" shape-rendering="crispEdges"/>
<path d="M1325 605.500H1370" stroke="#a0a0a0" stroke-width="2"/>
<path d="M1306 590H1299V597H1303V604H1299" fill="none" stroke="#fff" stroke-width="2" shape-rendering="crispEdges"/>
<path d="M1297 603L1303 609M1303 603L1297 609" stroke="#fff"/>

<!-- coordinates panel -->
<rect x="1277" y="729" width="163" height="2" fill="#3c7566"/><rect x="1277" y="731" width="163" height="43" fill="#52c9aa"/>
<text class="m" x="1281" y="749" font-size="14px" textLength="116">X = 3.584941"</text>
<text class="m" x="1281" y="764" font-size="14px" textLength="116">Y = 3.780439"</text>

<!-- bottom rows -->
<rect y="774" width="1440" height="34" fill="#ffffd2"/>
<rect y="807" width="1440" height="4" fill="#6c9088"/>
<rect x="1360" y="775" width="80" height="32" fill="#52c9aa"/>
<rect x="1363" y="777" width="74" height="29" fill="#9ae8d0"/><path d="M1437 777V806H1363L1365 804H1435V779Z" fill="#2f7f6c"/><rect x="1366" y="780" width="68" height="23" fill="#52c9aa"/>
<text class="m" x="1373" y="796" font-size="14px" textLength="37">Inch</text>
<rect x="1417" y="789" width="13" height="5" fill="#9fd9d9" stroke="#2f7f6c"/>

<g fill="none" stroke="#000">
<rect x="3" y="776" width="30" height="30" fill="#ffffd2" stroke="#b8b890"/><rect x="8.500" y="782.500" width="17" height="18"/><path d="M11 785L23 798M23 798V793M23 798H18M11 785V790M11 785H16"/>
<rect x="34" y="776" width="30" height="30" fill="#ffffd2" stroke="#b8b890"/><rect x="40.500" y="782.500" width="17" height="18"/><path d="M41 799L55 784M41 799H57"/>
<rect x="66" y="775" width="29" height="32" fill="#6c9088" stroke="none"/><rect x="69" y="778" width="23" height="26" fill="#ffffd2" stroke="none"/><rect x="72.500" y="783.500" width="16" height="16"/><path d="M80.500 784V799M73 791.500H88M73 790L78 784"/>
</g>
<text x="45" y="791" font-family="Liberation Mono,monospace" font-size="6px" fill="#000">L</text><text x="49" y="798" font-family="Liberation Mono,monospace" font-size="6px" fill="#000">∞</text>
<text class="m" x="98" y="795" font-size="13px" textLength="36">X Y :</text>
<rect x="144" y="778" width="172" height="28" fill="#b8b890"/><rect x="147" y="780" width="166" height="23" fill="#ffffd2"/>
<path d="M152.500 780V795" stroke="#000" stroke-dasharray="1 1"/>
<rect x="318" y="776" width="28" height="31" fill="#6c9088"/><rect x="320" y="778" width="24" height="27" fill="#9fd9d9"/><rect x="324.500" y="782.500" width="15" height="18" fill="#ffffd2" stroke="#000"/><rect x="331" y="785" width="2" height="9"/><rect x="331" y="796" width="2" height="2"/>
<rect x="347" y="775" width="1" height="32" fill="#6c9088"/>
<text class="m" x="351" y="795" font-size="12px" textLength="217">&lt;M1&gt; - Select first area corner</text>

<rect y="810" width="1440" height="28" fill="#5c8f86"/><rect x="2" y="812" width="1436" height="25" fill="#e0ffff"/><path d="M1436 812V836H3L5 834H1434V812Z" fill="#4f8f86"/><rect x="4" y="813" width="1430" height="21" fill="#b0ffff"/>
<text class="m" x="625" y="828" font-size="12px" textLength="190">662 r450 Pads were selected</text>
<rect y="838" width="1440" height="6" fill="#d4d0c8"/>

<!-- Popview -->
<rect x="846" y="296" width="443" height="426" fill="#d4d0c8"/>
<path d="M1289 296V722H846V721H1288V296Z" fill="#555"/><path d="M846 296H1289V297H847V722H846Z" fill="#f4f4f4"/>
<rect x="849" y="300" width="437" height="19" fill="url(#pb)"/>
<rect x="851" y="303" width="14" height="13" fill="#eee"/><rect x="851" y="303" width="14" height="3" fill="#0a246a"/><path d="M853 307L862 315M862 307L853 315" stroke="#8c8c00" stroke-width="2.500"/>
<text x="868" y="313" font-family="Liberation Sans,sans-serif" font-weight="bold" font-size="11px" fill="#d8d8d8" textLength="65" lengthAdjust="spacingAndGlyphs">Popview - 1</text>
<rect x="1268" y="302" width="16" height="14" fill="#d4d0c8" stroke="#555"/><path d="M1272 305L1280 313M1280 305L1272 313" stroke="#000" stroke-width="1.600"/>
<rect x="849" y="319" width="437" height="400" fill="#52c9aa"/>
<rect x="849" y="320" width="401" height="370" fill="#3f7a6c"/><rect x="851" y="322" width="399" height="368" fill="#a6e4d0"/>
<rect x="852" y="322" width="394" height="365" fill="#000"/>
<!-- traces -->
<path d="M1246 513V507H914Q907 507 907 514V687H918V522H1246V513Z" fill="#f00"/>
<path d="M909 687V517Q909 513 913 513H1246V518.500H917V687Z" fill="#bf9900"/>
<rect x="917" y="518" width="329" height="3" fill="#4a9900"/>
<path d="M853 620H925Q932 620 932 627V687H922V634H853Z" fill="#f00"/>
<path d="M853 626H926Q931 626 931 631V687H923.500V632H853Z" fill="#bf9900"/>
<rect x="853" y="632" width="56" height="2" fill="#4a9900"/><rect x="917" y="632" width="6" height="2" fill="#4a9900"/>
<rect x="907" y="620" width="11" height="67" fill="#f00"/><rect x="909" y="620" width="7.500" height="67" fill="#bf9900"/>
<rect x="853" y="549" width="84" height="10" fill="#bf9900"/><rect x="853" y="548.500" width="54" height="1" fill="#e03000"/>
<path d="M937 554H1175C1195 554 1210 572 1210 594V687" fill="none" stroke="#4a9900" stroke-width="8"/>
<circle cx="1112" cy="565.500" r="38" fill="#4a9900"/>
<!-- popview tools -->
<g transform="translate(1251,321)"><use href="#pt"/><rect x="8.500" y="12.500" width="11" height="11" fill="none" stroke="#000" stroke-width="2"/><path d="M20 8h5v5h-5z" fill="none" stroke="#000"/><path d="M12 18L15 15V21Z"/></g>
<g transform="translate(1251,356)"><use href="#pt"/><path d="M10 15V25H24V15" fill="none" stroke="#000" stroke-width="2"/><path d="M17 8L22 13H19.500V20H14.500V13H12Z"/></g>
<g transform="translate(1251,391)"><use href="#pt"/><path d="M10 18V9H24V18" fill="none" stroke="#000" stroke-width="2"/><path d="M17 26L22 21H19.500V14H14.500V21H12Z"/></g>
<g transform="translate(1251,426)"><use href="#pt"/><path d="M15 9H24V25H15" fill="none" stroke="#000" stroke-width="2"/><path d="M8 17L14 11V14H20V20H14V23Z"/></g>
<g transform="translate(1251,461)"><use href="#pt"/><path d="M19 9H10V25H19" fill="none" stroke="#000" stroke-width="2"/><path d="M27 17L20 11V14H14V20H20V23Z"/></g>
<g transform="translate(1251,496)"><use href="#pt"/><rect x="14.500" y="13.500" width="5" height="5" fill="none" stroke="#000"/><path d="M17 12L12 7H22ZM17 20L12 26H22ZM13 16L7 11V21ZM21 16L27 11V21Z"/></g>
<g transform="translate(1251,531)"><use href="#pt"/><rect x="14.500" y="14.500" width="5" height="5" fill="none" stroke="#000"/><path d="M17 8L13 12H21ZM17 26L13 22H21ZM8 17L12 13V21ZM26 17L22 13V21Z"/></g>
<rect x="849" y="690" width="437" height="29" fill="#52c9aa"/>
<rect x="850" y="691" width="435" height="27" fill="#c8efef"/><path d="M1285 691V718H850L852 716H1283V693Z" fill="#4f7f76"/><rect x="852" y="693" width="431" height="23" fill="#9fd9d9"/>
<text class="m" x="1045" y="709" font-size="14px" textLength="44">Close</text>
</svg>
</body></html>
